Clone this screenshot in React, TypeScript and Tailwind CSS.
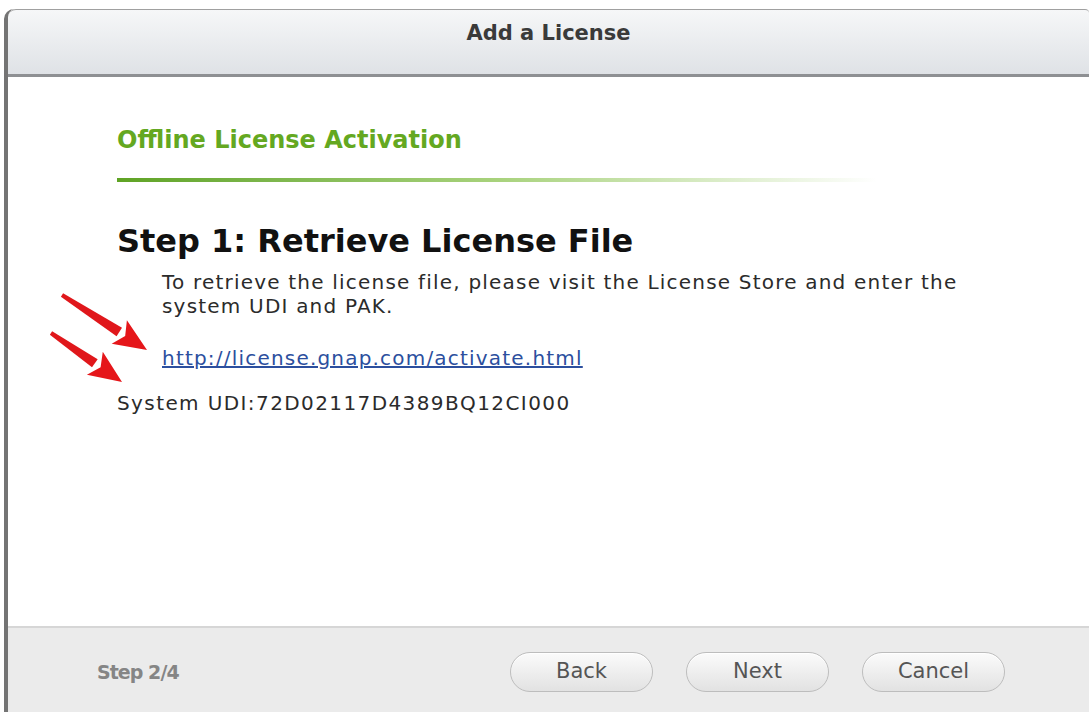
import React from "react";

function Arrow({ x1, y1, x2, y2 }: { x1: number; y1: number; x2: number; y2: number }) {
  const dx = x2 - x1;
  const dy = y2 - y1;
  const len = Math.hypot(dx, dy);
  const ux = dx / len;
  const uy = dy / len;
  const px = -uy;
  const py = ux;
  const headLen = 33;
  const headW = 14;
  const bx = x2 - ux * headLen;
  const by = y2 - uy * headLen;
  const shaft = `${x1 + px * 2},${y1 + py * 2} ${bx + px * 5},${by + py * 5} ${bx - px * 5},${by - py * 5} ${x1 - px * 2},${y1 - py * 2}`;
  const head = `${x2},${y2} ${bx + px * headW},${by + py * headW} ${bx + ux * 7},${by + uy * 7} ${bx - px * headW},${by - py * headW}`;
  return (
    <g>
      <polygon points={shaft} fill="#e0171b" />
      <polygon points={head} fill="#e5161a" />
    </g>
  );
}

export default function App() {
  const buttons = ["Back", "Next", "Cancel"];

  return (
    <div className="relative h-[712px] w-[1092px] overflow-hidden bg-white font-['DejaVu_Sans',Verdana,sans-serif]">
      <div className="ml-[4px] mt-[9px] flex h-[703px] w-[1085px] flex-col rounded-tl-[10px] border-l-[4px] border-[#747474]">
        {/* Title bar */}
        <div className="flex h-[68px] justify-center rounded-tl-[8px] rounded-tr-[4px] border-t border-b-[3px] border-t-[#a0a0a0] border-b-[#8e9093] bg-gradient-to-b from-[#f6f7f8] to-[#dfe2e6] pt-[9px]">
          <h1 className="text-[21px] font-bold leading-[28px] text-[#3a3a3a]">Add a License</h1>
        </div>

        {/* Body */}
        <div className="relative flex-1 bg-white pl-[109px]">
          <h2 className="mt-[49px] text-[24px] font-bold leading-[28px] text-[#64a821]">Offline License Activation</h2>
          <div className="mt-[24px] h-[4px] w-[760px] bg-gradient-to-r from-[#5fa323] via-[#a8d27c] to-transparent" />

          <h3 className="mt-[40px] text-[32px] font-bold leading-[38px] text-[#111]">Step 1: Retrieve License File</h3>
          <p className="ml-[45px] mt-[10px] w-[830px] text-[20px] leading-[24px] tracking-[0.06em] text-[#2b2b2b]">
            To retrieve the license file, please visit the License Store and enter the system UDI and PAK.
          </p>
          <a
            href="#"
            className="ml-[45px] mt-[28px] block w-fit text-[20px] leading-[24px] tracking-[0.06em] text-[#2c4f9e] underline"
          >
            http://license.gnap.com/activate.html
          </a>
          <p className="mt-[21px] text-[20px] leading-[24px] tracking-[0.07em] text-[#2b2b2b]">
            System UDI:72D02117D4389BQ12CI000
          </p>

          <svg className="absolute left-[-8px] top-0" width="200" height="330" viewBox="0 0 200 330">
            <Arrow x1={62} y1={218} x2={147} y2={273} />
            <Arrow x1={51} y1={256} x2={122} y2={305} />
          </svg>
        </div>

        {/* Footer */}
        <div className="flex h-[86px] items-center border-t-[2px] border-[#d6d6d6] bg-[#ebebeb] pl-[89px] pr-[84px] pt-[4px]">
          <span className="text-[19px] font-bold tracking-[-0.05em] text-[#858585]">Step 2/4</span>
          <div className="ml-auto flex gap-[33px]">
            {buttons.map((b) => (
              <button
                key={b}
                className="h-[40px] w-[143px] rounded-full border border-[#bdbdbd] bg-gradient-to-b from-[#fbfbfb] to-[#e2e2e2] text-[21px] text-[#555] shadow-[inset_0_1px_0_#fff]"
              >
                {b}
              </button>
            ))}
          </div>
        </div>
      </div>
    </div>
  );
}
